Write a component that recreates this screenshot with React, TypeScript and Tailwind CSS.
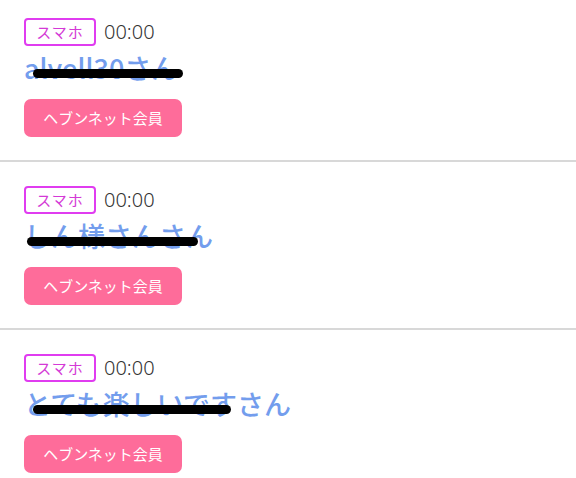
const rows = [
  { name: 'alvell30さん', strike: { left: 33, width: 150 } },
  { name: 'しん様さんさん', strike: { left: 27, width: 171 } },
  { name: 'とても楽しいですさん', strike: { left: 33, width: 198 } },
];

const font = {
  fontFamily: '"Noto Sans CJK JP", "Noto Sans", sans-serif',
};

interface RowProps {
  name: string;
  strike: { left: number; width: number };
  first: boolean;
}

const MemberRow = ({ name, strike, first }: RowProps) => {
  return (
    <article
      className={`relative border-b-2 border-[#d8d8d8] px-6 pb-[23px] ${first ? 'pt-[17px]' : 'pt-[23px]'}`}
    >
      <div className="flex items-center gap-2">
        <span className="flex h-[28px] w-[72px] items-center justify-center rounded-[4px] border-2 border-[#e03cf0] text-[15px] tracking-[1px] text-[#d43ad6]">
          スマホ
        </span>
        <span className="text-[20px] font-light text-[#333]" style={{ fontFamily: '"Noto Sans", sans-serif' }}>
          00:00
        </span>
      </div>
      <div className="relative mt-[3px] h-[36px] whitespace-nowrap text-[27px] font-medium leading-[36px] text-[#739ded]">
        {name}
        <span
          className="absolute top-[19px] h-[9px] rounded-full bg-black"
          style={{ left: strike.left - 24, width: strike.width }}
        />
      </div>
      <button
        type="button"
        className="mt-[13px] flex h-[38px] w-[158px] items-center justify-center rounded-[7px] bg-[#fe6c9a] text-[15px] text-white"
      >
        ヘブンネット会員
      </button>
    </article>
  );
};

export default function App() {
  return (
    <div className="h-[478px] w-[576px] overflow-hidden bg-white" style={font}>
      {rows.map((r, i) => (
        <MemberRow key={i} name={r.name} strike={r.strike} first={i === 0} />
      ))}
    </div>
  );
}
